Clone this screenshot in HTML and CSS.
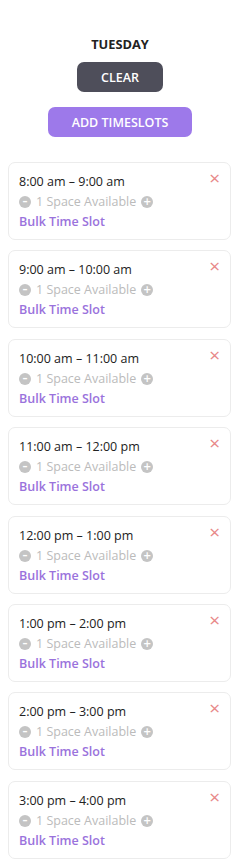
FILE: index.html
```html
<!DOCTYPE html>
<html lang="en">
<head>
  <meta charset="UTF-8" />
  <title>Tuesday</title>
  <link rel="stylesheet" href="styles.css">
</head>
<body>
  <div class="day">
    <h3 class="day-name">TUESDAY</h3>
    <button class="btn btn-clear">CLEAR</button>
    <button class="btn btn-add">ADD TIMESLOTS</button>

    <div class="slots">
      <div class="slot">
        <div class="slot-time">8:00 am – 9:00 am</div>
        <div class="slot-space"><span class="circ">–</span> 1 Space Available <span class="circ">+</span></div>
        <a class="slot-bulk">Bulk Time Slot</a>
        <span class="slot-remove">×</span>
      </div>
      <div class="slot">
        <div class="slot-time">9:00 am – 10:00 am</div>
        <div class="slot-space"><span class="circ">–</span> 1 Space Available <span class="circ">+</span></div>
        <a class="slot-bulk">Bulk Time Slot</a>
        <span class="slot-remove">×</span>
      </div>
      <div class="slot">
        <div class="slot-time">10:00 am – 11:00 am</div>
        <div class="slot-space"><span class="circ">–</span> 1 Space Available <span class="circ">+</span></div>
        <a class="slot-bulk">Bulk Time Slot</a>
        <span class="slot-remove">×</span>
      </div>
      <div class="slot">
        <div class="slot-time">11:00 am – 12:00 pm</div>
        <div class="slot-space"><span class="circ">–</span> 1 Space Available <span class="circ">+</span></div>
        <a class="slot-bulk">Bulk Time Slot</a>
        <span class="slot-remove">×</span>
      </div>
      <div class="slot">
        <div class="slot-time">12:00 pm – 1:00 pm</div>
        <div class="slot-space"><span class="circ">–</span> 1 Space Available <span class="circ">+</span></div>
        <a class="slot-bulk">Bulk Time Slot</a>
        <span class="slot-remove">×</span>
      </div>
      <div class="slot">
        <div class="slot-time">1:00 pm – 2:00 pm</div>
        <div class="slot-space"><span class="circ">–</span> 1 Space Available <span class="circ">+</span></div>
        <a class="slot-bulk">Bulk Time Slot</a>
        <span class="slot-remove">×</span>
      </div>
      <div class="slot">
        <div class="slot-time">2:00 pm – 3:00 pm</div>
        <div class="slot-space"><span class="circ">–</span> 1 Space Available <span class="circ">+</span></div>
        <a class="slot-bulk">Bulk Time Slot</a>
        <span class="slot-remove">×</span>
      </div>
      <div class="slot">
        <div class="slot-time">3:00 pm – 4:00 pm</div>
        <div class="slot-space"><span class="circ">–</span> 1 Space Available <span class="circ">+</span></div>
        <a class="slot-bulk">Bulk Time Slot</a>
        <span class="slot-remove">×</span>
      </div>
    </div>
  </div>
</body>
</html>
```
FILE: styles.css
```css
* {margin: 0;padding: 0;box-sizing: border-box;}

body {
  font-family: 'Open Sans', sans-serif;
  background: #ffffff;
  color: #222;
}

.day {
  display: flex;
  flex-direction: column;
  align-items: center;
  padding: 36px 8px 0 8px;
}

.day-name {
  font-size: 12.8px;
  font-weight: 700;
  color: #222;
  line-height: 17px;
  margin-bottom: 9px;
}

.btn {
  font-family: inherit;
  font-size: 12.5px;
  font-weight: 600;
  color: #fff;
  border: none;
  border-radius: 7px;
  height: 30px;
  cursor: pointer;
}

.btn-clear {
  width: 86px;
  background: #4e4e5a;
}

.btn-add {
  width: 144px;
  margin-top: 15px;
  background: #9d79ea;
}

.slots {
  align-self: stretch;
  display: flex;
  flex-direction: column;
  gap: 10.4px;
  margin-top: 25px;
  padding-right: 1px;
}

.slot {
  position: relative;
  border: 1px solid #ececec;
  border-radius: 7px;
  height: 78px;
  padding: 9px 10px 0 10px;
  font-size: 12.5px;
  line-height: 20px;
}

.slot-time {
  color: #222;
}

.slot-space {
  color: #bbb;
  display: flex;
  align-items: center;
  gap: 5px;
}

.circ {
  display: inline-flex;
  align-items: center;
  justify-content: center;
  width: 12px;
  height: 12px;
  border-radius: 50%;
  background: #c4c4c4;
  color: #fff;
  font-family: 'DejaVu Sans', sans-serif;
  font-size: 10px;
  font-weight: 700;
  line-height: 12px;
}

.slot-bulk {
  display: block;
  color: #9a72dc;
  font-weight: 600;
}

.slot-remove {
  position: absolute;
  top: 5px;
  right: 10px;
  color: #e88888;
  font-size: 19px;
  line-height: 20px;
}
```
